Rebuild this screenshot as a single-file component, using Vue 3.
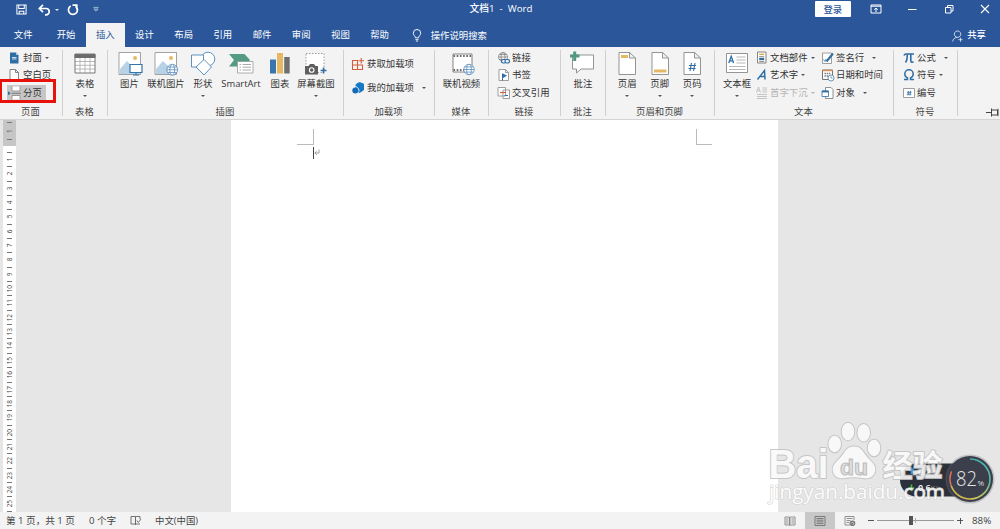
<template>
    <div class="word">
        <header class="title-bar">
            <div class="quick-access">
                <svg class="qa-save" viewBox="0 0 12 12">
                    <path
                        d="M1 1h10v10H1zM3 1v4h6V1M3.5 11V8h5v3"
                        fill="none"
                        stroke="#fff"
                        stroke-width="1.1"
                    />
                </svg>
                <svg class="qa-undo" viewBox="0 0 13 12">
                    <path
                        d="M1.500 4.500H8a3.200 3.200 0 0 1 0 6.400H7M5 .8 1.300 4.500 5 8.200"
                        fill="none"
                        stroke="#fff"
                        stroke-width="1.7"
                    />
                </svg>
                <i class="caret light"></i>
                <svg class="qa-redo" viewBox="0 0 12 12">
                    <path
                        d="M3.700 2A4.500 4.500 0 1 0 8.500 2.200M5.500 1.200H9.800V5.500"
                        fill="none"
                        stroke="#fff"
                        stroke-width="1.7"
                    />
                </svg>
                <svg class="qa-more" viewBox="0 0 7 6">
                    <path
                        d="M.5.500h6M1 2.500h5L3.500 5z"
                        fill="none"
                        stroke="#dfe6f2"
                        stroke-width=".8"
                    />
                </svg>
            </div>
            <div class="doc-title">文档1&nbsp; -&nbsp; Word</div>
            <div class="window-tools">
                <button class="login">登录</button>
                <svg class="win" viewBox="0 0 12 12">
                    <path
                        d="M1 2h10v8H1zM1 3.200h10M6 9V5M4.200 6.700 6 5l1.800 1.700"
                        fill="none"
                        stroke="#fff"
                    />
                </svg>
                <svg class="win" viewBox="0 0 12 12">
                    <path d="M2 6.500h8.500" stroke="#fff" />
                </svg>
                <svg class="win" viewBox="0 0 12 12">
                    <path
                        d="M2.500 4.500h5.500v5.500H2.500zM4.500 4.500V2.500H10V8H8"
                        fill="none"
                        stroke="#fff"
                    />
                </svg>
                <svg class="win" viewBox="0 0 12 12">
                    <path d="m2 2 8 8M10 2l-8 8" stroke="#fff" stroke-width="1.1" />
                </svg>
            </div>
        </header>

        <nav class="tabs">
            <span
                v-for="tab in tabs"
                :key="tab"
                class="tab"
                :class="{ active: tab === activeTab, file: tab === '文件' }"
                @click="activeTab = tab"
                >{{ tab }}</span
            >
            <svg class="bulb" viewBox="0 0 10 14">
                <path
                    d="M3.300 9.500C3.300 7.500 1 6.800 1 4.500a4 4 0 0 1 8 0c0 2.300-2.300 3-2.300 5zM3.300 11.500h3.400M4 13h2"
                    fill="none"
                    stroke="#fff"
                />
            </svg>
            <span class="tell-me">操作说明搜索</span>
            <svg class="person" viewBox="0 0 12 13">
                <path
                    d="M6 8a3.500 3.500 0 1 1 .1 0M.8 12.500C1 10 3 8 6 8M7 10.500h4.500M9.300 8.300v4.500"
                    fill="none"
                    stroke="#e4eaf4"
                    stroke-width=".9"
                />
            </svg>
            <span class="share">共享</span>
        </nav>

        <section class="ribbon">
            <div
                v-for="group in groups"
                :key="group.id"
                class="group"
                :style="{ width: group.width + 'px' }"
            >
                <div class="group-body" :class="group.id">
                    <div
                        v-for="item in group.big"
                        :key="item.label"
                        class="big"
                        :style="{ width: item.width + 'px' }"
                    >
                        <svg class="big-icon" viewBox="0 0 26 26">
                            <use :href="'#' + item.icon" />
                        </svg>
                        <span>{{ item.label }}</span>
                        <i v-if="item.menu" class="caret"></i>
                    </div>
                    <div v-for="(col, i) in group.cols" :key="i" class="col">
                        <div
                            v-for="item in col"
                            :key="item.label"
                            class="small"
                            :class="{
                                selected: item.selected,
                                disabled: item.disabled,
                            }"
                        >
                            <svg class="small-icon" viewBox="0 0 14 14">
                                <use :href="'#' + item.icon" />
                            </svg>
                            <span>{{ item.label }}</span>
                            <i
                                v-if="item.menu"
                                class="caret"
                                :class="{ far: item.far }"
                            ></i>
                        </div>
                    </div>
                </div>
                <div class="group-label">{{ group.label }}</div>
            </div>
            <div class="ribbon-end">
                <svg class="pin" viewBox="0 0 14 9">
                    <path
                        d="M0 4.500h5M5.500.5v8M5.500 2h6v5h-6M12 .8v7.400"
                        fill="none"
                        stroke="#444"
                    />
                </svg>
            </div>
            <div class="red-frame"></div>
        </section>

        <main class="workspace">
            <div class="ruler">
                <div class="ruler-margin">
                    <i></i>
                    <b>1</b>
                    <i></i>
                </div>
                <div v-for="n in 25" :key="n" class="ruler-cell">
                    <i></i>
                    <b>{{ n }}</b>
                </div>
                <i class="ruler-last"></i>
            </div>
            <div class="page">
                <div class="corner left"></div>
                <div class="corner right"></div>
                <div class="cursor">
                    <svg viewBox="0 0 6 6">
                        <path
                            d="M5 .5V4H1M2.700 2.200.8 4l1.900 1.700"
                            fill="none"
                            stroke="#888"
                            stroke-width=".8"
                        />
                    </svg>
                </div>
            </div>
        </main>

        <footer class="status">
            <span class="st-page">第 1 页，共 1 页</span>
            <span class="st-words">0 个字</span>
            <svg class="st-proof" viewBox="0 0 12 11">
                <path
                    d="M5.500 2v8M1 1.500h4.500V9H1zM5.500 1.500H10V4M5.500 9H10M6.800 5.500l1.500 2L11 4"
                    fill="none"
                    stroke="#666"
                    stroke-width=".9"
                />
            </svg>
            <span>中文(中国)</span>
            <div class="views">
                <span class="view">
                    <svg viewBox="0 0 12 12">
                        <path
                            d="M1 2h4.500v8H1zM6.500 2H11v8H6.500M6 2v9M2 4h2.500M2 6h2.500M2 8h2.500M7.500 4H10M7.500 6H10M7.500 8H10"
                            fill="none"
                            stroke="#777"
                            stroke-width=".8"
                        />
                    </svg>
                </span>
                <span class="view on">
                    <svg viewBox="0 0 12 12">
                        <path
                            d="M1 1.500h10v9H1zM2.500 3.500h7M2.500 5.200h7M2.500 6.900h7M2.500 8.600h7"
                            fill="none"
                            stroke="#666"
                            stroke-width=".8"
                        />
                    </svg>
                </span>
                <span class="view">
                    <svg viewBox="0 0 12 12">
                        <path
                            d="M6 10H1V1.500h9V5M2.500 3.500h6M2.500 5.500h4M2.500 7.500h3"
                            fill="none"
                            stroke="#777"
                            stroke-width=".8"
                        />
                        <circle cx="8.500" cy="8.300" r="2.800" fill="#777" />
                        <path
                            d="M7 8.500 8.500 7l1.300 1.500-1 1.500"
                            stroke="#eee"
                            stroke-width=".7"
                            fill="none"
                        />
                    </svg>
                </span>
            </div>
            <div class="zoom">
                <i class="minus"></i>
                <div class="track"><i class="thumb"></i><i class="mid"></i></div>
                <i class="plus"></i>
                <span class="percent">88%</span>
            </div>
        </footer>

        <!-- network speed widget floating over the desktop -->
        <svg class="meter" viewBox="0 0 104 54">
            <defs>
                <linearGradient id="ring" x1="0" y1="0" x2="0" y2="1">
                    <stop offset="0" stop-color="#43b8b4" />
                    <stop offset=".6" stop-color="#62b89b" />
                    <stop offset="1" stop-color="#d4ca52" />
                </linearGradient>
            </defs>
            <path
                d="M16.500 10.500H70v33H16.500a16.500 16.500 0 0 1 0-33"
                fill="#2c303b"
            />
            <path
                d="M11.500 21V15.500M9 18 11.500 15.300 14 18"
                fill="none"
                stroke="#2d9be0"
                stroke-width="1.600"
            />
            <path
                d="M11.500 31.500V37M9 34.500 11.500 37.200 14 34.500"
                fill="none"
                stroke="#3fba42"
                stroke-width="1.600"
            />
            <text x="18" y="21.500" class="speed">0.2<tspan>K/s</tspan></text>
            <text x="18" y="38" class="speed">0.6<tspan>K/s</tspan></text>
            <circle cx="70" cy="26" r="24.500" fill="#777b87" opacity=".35" />
            <circle cx="70" cy="26" r="23" fill="#3b3f4b" />
            <path
                d="M70 6a20 20 0 0 1 0 40"
                fill="none"
                stroke="url(#ring)"
                stroke-width="1.600"
            />
            <path
                d="M70 46A20 20 0 0 1 51.200 32.800"
                fill="none"
                stroke="#d6b84e"
                stroke-width="1.600"
            />
            <path
                d="M51.200 32.800A20 20 0 0 1 51.500 18.400"
                fill="none"
                stroke="#d6705c"
                stroke-width="1.600"
            />
            <text
                x="56"
                y="32.800"
                class="load"
                textLength="21"
                lengthAdjust="spacingAndGlyphs"
            >82</text>
            <text x="77.500" y="32.800" class="load-unit">%</text>
        </svg>

        <svg class="watermark" viewBox="0 0 190 92">
            <g class="outlined">
                <text
                    x="4.500"
                    y="59.500"
                    class="brand"
                    textLength="60"
                    lengthAdjust="spacingAndGlyphs"
                >Bai</text>
                <text x="118.500" y="58" class="brand-cn" textLength="60">经验</text>
                <ellipse cx="70.700" cy="26" rx="6.300" ry="8.300" />
                <ellipse cx="84" cy="13.500" rx="6.300" ry="8.800" />
                <ellipse cx="99.700" cy="14.800" rx="6.300" ry="8.800" />
                <ellipse cx="110" cy="30" rx="6.300" ry="8.300" />
                <path
                    d="M90 28.500c8 0 9 6 14 11.500 5 5 8.500 8 7 14-2 6-7 7-12 6-6-1-12-1-18 0-5 1-10 0-12-6-1.500-6 2-9 7-14 5-5.500 6-11.500 14-11.500z"
                />
            </g>
            <text
                x="76"
                y="57"
                class="du"
                textLength="28"
                lengthAdjust="spacingAndGlyphs"
            >du</text>
            <text
                x="5"
                y="81"
                class="site"
                textLength="176"
                lengthAdjust="spacingAndGlyphs"
            >jingyan.baidu.com</text>
        </svg>

        <svg class="sprite" width="0" height="0">
            <!-- small ribbon icons, 14 x 14 -->
            <symbol id="s-cover" viewBox="0 0 14 14">
                <path d="M3 1.500h6L11.500 4v8.500H3z" fill="#2f6ea5" />
                <path d="M9 1.500V4h2.500z" fill="#b4cbe0" />
                <path d="M5 6.500h4.500M5 8h4.500" stroke="#cfe0ef" />
            </symbol>
            <symbol id="s-blank" viewBox="0 0 14 14">
                <path
                    d="M3 1.500h5.500l3 3v8H3zM8.500 1.500v3h3"
                    fill="#fff"
                    stroke="#777"
                    stroke-width=".9"
                />
            </symbol>
            <symbol id="s-break" viewBox="0 0 14 14">
                <path
                    d="M5 .5v4.500h8V.5M5 13.500V9.500h8v4"
                    fill="#fff"
                    stroke="#888"
                    stroke-width=".8"
                />
                <path d="M4.500 7.300H14" stroke="#666" stroke-width=".8" />
                <path d="M1 5.300 3.800 7.300 1 9.300z" fill="#2f6ea5" />
            </symbol>
            <symbol id="s-get" viewBox="0 0 14 14">
                <path
                    d="M1.500 3.500h5v9h-5zM6.500 8h5v4.500h-5M1.500 8h5M10.200 1v5.500M7.500 3.700H13"
                    fill="none"
                    stroke="#d35f3c"
                    stroke-width="1.100"
                />
            </symbol>
            <symbol id="s-mine" viewBox="0 0 14 14">
                <path
                    d="M8.500 1.500 12.500 3v6l-4 2.500L5 9V3.500z"
                    fill="#1679c5"
                    stroke="#1679c5"
                />
                <circle cx="4.300" cy="9.500" r="3" fill="#1669b5" />
                <path d="M3 5.500C5.500 5 8 7 8 10.500" fill="none" stroke="#f1f1f1" />
            </symbol>
            <symbol id="s-link" viewBox="0 0 14 14">
                <g fill="none" stroke="#777" stroke-width=".7">
                    <circle cx="6" cy="6" r="4.500" />
                    <ellipse cx="6" cy="6" rx="2" ry="4.500" />
                    <path d="M1.500 6h9M2.200 3.500h7.600M2.200 8.500h3" />
                </g>
                <g fill="#f1f1f1" stroke="#2f6ea5" stroke-width="1.200">
                    <rect x="4.500" y="8.500" width="4.500" height="3.500" rx="1.700" />
                    <rect x="8" y="8.500" width="4.500" height="3.500" rx="1.700" />
                </g>
            </symbol>
            <symbol id="s-bookmark" viewBox="0 0 14 14">
                <path
                    d="M2 1.500h6.500l3 3v8H2zM8.500 1.500v3h3"
                    fill="#fff"
                    stroke="#888"
                    stroke-width=".8"
                />
                <path d="M5.500 5.500v7" stroke="#2f6ea5" />
                <path d="M6 5.500 10 7.800 6 10z" fill="#2f6ea5" />
            </symbol>
            <symbol id="s-cross" viewBox="0 0 14 14">
                <path
                    d="M1 1.500h7.500v8.500H1zM6 4h6.500v8.500H6z"
                    fill="#fff"
                    stroke="#888"
                    stroke-width=".8"
                />
                <path d="M3 6.500h6" stroke="#d35f3c" stroke-width="1.200" />
                <path d="M7.500 9.500h3.500" stroke="#2f6ea5" />
            </symbol>
            <symbol id="s-parts" viewBox="0 0 14 14">
                <path
                    d="M2.500 1h8.500v11H2.500z"
                    fill="#fff"
                    stroke="#777"
                    stroke-width=".9"
                />
                <path d="M4.200 3.300h5" stroke="#e0ad4e" stroke-width="1.400" />
                <path d="M4.200 5.800h5M4.200 10.300h5" stroke="#777" />
                <path d="M4.200 7h5v2H4.200z" fill="#2f6ea5" />
            </symbol>
            <symbol id="s-art" viewBox="0 0 14 14">
                <path
                    d="M2.500 11.500 9.500 2.500 10 11.500M5 8.500h4.500"
                    fill="none"
                    stroke="#2f6ea5"
                    stroke-width="1.500"
                />
            </symbol>
            <symbol id="s-drop" viewBox="0 0 14 14">
                <path
                    d="M1.500 6.500 3.500 1l2 5.500M2.200 4.800h2.600M7.500 2H12M7.500 4H12M7.500 6H12M2 8.500h10M2 10.500h10M2 12.500h10"
                    fill="none"
                    stroke="#b8b8b8"
                    stroke-width=".8"
                />
            </symbol>
            <symbol id="s-sign" viewBox="0 0 14 14">
                <path
                    d="M1.500 2h9v10.500h-9z"
                    fill="#fff"
                    stroke="#888"
                    stroke-width=".8"
                />
                <path d="M5.500 10.500 12 2.500" stroke="#2f6ea5" stroke-width="2" />
                <path
                    d="M2.500 8.500 4 10.500 5 8"
                    fill="none"
                    stroke="#2f6ea5"
                    stroke-width=".8"
                />
            </symbol>
            <symbol id="s-date" viewBox="0 0 14 14">
                <path
                    d="M1.500 2h10v9.500h-10z"
                    fill="#fff"
                    stroke="#666"
                    stroke-width=".9"
                />
                <path d="M1.500 2.500h10" stroke="#d98d5b" stroke-width="1.500" />
                <path
                    d="M3.500 5.500H10M3.500 8H8"
                    stroke="#777"
                    stroke-dasharray="1.400 .8"
                    stroke-width="1.400"
                />
                <circle
                    cx="10"
                    cy="10"
                    r="3"
                    fill="#fff"
                    stroke="#5a8ab5"
                    stroke-width=".9"
                />
                <path
                    d="M10 8.300V10h1.500"
                    fill="none"
                    stroke="#5a8ab5"
                    stroke-width=".8"
                />
            </symbol>
            <symbol id="s-object" viewBox="0 0 14 14">
                <path
                    d="M4.500 1.500h5.500l2 2v9H4.500z"
                    fill="#fff"
                    stroke="#777"
                    stroke-width=".8"
                />
                <path
                    d="M1 5h6.500v5.500H1z"
                    fill="#fff"
                    stroke="#2f6ea5"
                    stroke-width=".8"
                />
                <path d="M1 5.500h6.500" stroke="#2f6ea5" stroke-width="1.800" />
            </symbol>
            <symbol id="s-pi" viewBox="0 0 14 14">
                <path
                    d="M2 4.600C2.500 3.200 3 3 4 3h8M5.300 3.200C5.300 7 5 9.500 3.500 11.500M8.800 3.200v6.500c0 1.500 1.300 2 2.700 1"
                    fill="none"
                    stroke="#2f6ea5"
                    stroke-width="1.600"
                />
            </symbol>
            <symbol id="s-omega" viewBox="0 0 14 14">
                <path
                    d="M2 11.500h3.500V10C3.500 9 2.800 7.500 2.800 6a4.200 4.200 0 0 1 8.400 0c0 1.500-.7 3-2.700 4v1.500H12"
                    fill="none"
                    stroke="#2f6ea5"
                    stroke-width="1.500"
                />
            </symbol>
            <symbol id="s-number" viewBox="0 0 14 14">
                <path
                    d="M1.500 2.500h11v9h-11z"
                    fill="#fff"
                    stroke="#888"
                    stroke-width=".8"
                />
                <path
                    d="M6.500 5 6 9.500M8.500 5 8 9.500M5 6.300h4.500M4.800 8.200h4.500"
                    stroke="#2f6ea5"
                    stroke-width=".8"
                />
            </symbol>

            <!-- large ribbon icons, 26 x 26 -->
            <symbol id="b-table" viewBox="0 0 26 26">
                <path d="M3 3h20v19H3z" fill="#fff" />
                <path
                    d="M3 10.500h20M3 14.300h20M3 18h20M8 7v15M13 7v15M18 7v15"
                    stroke="#aaa"
                    stroke-width=".8"
                />
                <path d="M2.500 3h21v4h-21z" fill="#6b6b6b" />
                <path d="M3 3h20v19H3z" fill="none" stroke="#777" />
            </symbol>
            <symbol id="b-picture" viewBox="0 0 26 26">
                <path
                    d="M2 1.500h21.500v22H2z"
                    fill="#fff"
                    stroke="#8a8a8a"
                    stroke-width=".8"
                />
                <circle cx="18" cy="7" r="2" fill="#e9b765" />
                <path d="M3 23V18l7-8 6 6 3-2 4 4v5z" fill="#b7d1e6" />
                <path
                    d="M13 13.500h12v8H13z"
                    fill="#fff"
                    stroke="#3474aa"
                    stroke-width="1.200"
                />
                <path d="M16 24h6M19 21.500V24" stroke="#3474aa" />
            </symbol>
            <symbol id="globe" viewBox="0 0 14 14">
                <g fill="#fff" stroke="#5288b8" stroke-width=".8">
                    <circle cx="7" cy="7" r="5.600" />
                    <ellipse cx="7" cy="7" rx="2.500" ry="5.600" />
                    <path d="M1.400 7h11.200M2.200 4.200h9.600M2.200 9.800h9.600" />
                </g>
            </symbol>
            <symbol id="b-online" viewBox="0 0 26 26">
                <path
                    d="M2 1.500h21.500v22H2z"
                    fill="#fff"
                    stroke="#8a8a8a"
                    stroke-width=".8"
                />
                <circle cx="18" cy="7" r="2" fill="#e9b765" />
                <path d="M3 23V18l7-8 6 6 3-2 4 4v5z" fill="#b7d1e6" />
                <use href="#globe" x="12.500" y="12" width="13.500" height="13.500" />
            </symbol>
            <symbol id="b-shapes" viewBox="0 0 26 26">
                <g fill="#fff" stroke="#4d86b6" stroke-width=".9">
                    <circle cx="18" cy="8" r="6.800" />
                    <path d="M1.500 4h12v12h-12z" />
                    <path d="m14 8.500 7.500 7.500L14 24l-8-8z" />
                </g>
            </symbol>
            <symbol id="b-smart" viewBox="0 0 26 26">
                <path d="M1 3h15.500l5.500 6-5.500 6.500H1L6 9z" fill="#559a82" />
                <path
                    d="M9.500 10.500h15.500V22H9.500z"
                    fill="#fff"
                    stroke="#999"
                    stroke-width=".8"
                />
                <path
                    d="M11.500 13.500h1.500M11.500 16.200h1.500M11.500 19h1.500M14.500 13.500h8.500M14.500 16.200h8.500M14.500 19h8.500"
                    stroke="#aaa"
                />
            </symbol>
            <symbol id="b-chart" viewBox="0 0 26 26">
                <path d="M3 8.500h6v14H3z" fill="#3b75ad" />
                <path d="M10 2h6v20.500h-6z" fill="#e6b863" />
                <path d="M17.200 6h5.500v16.500h-5.500z" fill="#6f6f6f" />
            </symbol>
            <symbol id="b-shot" viewBox="0 0 26 26">
                <path
                    d="M3 2.500h18v19H3z"
                    fill="#fff"
                    stroke="#888"
                    stroke-width=".8"
                    stroke-dasharray="1.500 1.500"
                />
                <path d="M2 15h3.500l1.500-2h4l1.500 2H15v8.500H2z" fill="#5f5f5f" />
                <circle
                    cx="8.700"
                    cy="19"
                    r="2.300"
                    fill="#5f5f5f"
                    stroke="#fff"
                    stroke-width="1.100"
                />
                <path
                    d="M17.500 19.500h6M20.500 16.500v6"
                    stroke="#2f6ea5"
                    stroke-width="1.600"
                />
            </symbol>
            <symbol id="b-video" viewBox="0 0 26 26">
                <path
                    d="M4 3h19v18H4z"
                    fill="#fff"
                    stroke="#777"
                    stroke-width=".9"
                />
                <path
                    d="M4.500 5H23M4.500 19H23"
                    stroke="#666"
                    stroke-width="2.200"
                    stroke-dasharray="1.600 1.600"
                />
                <use href="#globe" x="13.500" y="12" width="13" height="13" />
            </symbol>
            <symbol id="b-comment" viewBox="0 0 26 26">
                <path
                    d="M2.500 4h21v14H11l-4.500 4V18h-4z"
                    fill="#fff"
                    stroke="#888"
                    stroke-width=".9"
                />
                <path d="M0 5h9.500M4.700.5v9.500" stroke="#4f9980" stroke-width="3" />
            </symbol>
            <symbol id="b-header" viewBox="0 0 26 26">
                <path
                    d="M5 1.500h10.500l6 5.500v16.500H5zM15.500 1.500V7h6"
                    fill="#fff"
                    stroke="#888"
                    stroke-width=".9"
                />
                <path d="M7 4h7v3H7z" fill="#e6b863" />
            </symbol>
            <symbol id="b-footer" viewBox="0 0 26 26">
                <path
                    d="M5 1.500h10.500l6 5.500v16.500H5zM15.500 1.500V7h6"
                    fill="#fff"
                    stroke="#888"
                    stroke-width=".9"
                />
                <path d="M7 18.500h12.500v3H7z" fill="#e6b863" />
            </symbol>
            <symbol id="b-pageno" viewBox="0 0 26 26">
                <path
                    d="M5 1.500h10.500l6 5.500v16.500H5zM15.500 1.500V7h6"
                    fill="#fff"
                    stroke="#888"
                    stroke-width=".9"
                />
                <path
                    d="m12.500 12-1.500 8M16 12l-1.500 8M10 14.500h7M9.500 17.500h7"
                    stroke="#2f6ea5"
                    stroke-width="1.100"
                />
            </symbol>
            <symbol id="b-textbox" viewBox="0 0 26 26">
                <path
                    d="M2.500 2.500h21v19h-21z"
                    fill="#fff"
                    stroke="#888"
                    stroke-width=".9"
                />
                <path
                    d="m4.800 12 2.400-6.800L9.600 12M5.600 9.800h3.200"
                    fill="none"
                    stroke="#2f6ea5"
                    stroke-width="1.300"
                />
                <path
                    d="M12.500 6h9M12.500 9h9M12.500 12h9M5 15.500h16.500M5 18.500h16.500"
                    stroke="#a5a5a5"
                    stroke-width=".8"
                />
            </symbol>
        </svg>
    </div>
</template>

<script setup>
import { ref } from "vue";

const tabs = [
    "文件",
    "开始",
    "插入",
    "设计",
    "布局",
    "引用",
    "邮件",
    "审阅",
    "视图",
    "帮助",
];
const activeTab = ref("插入");

const groups = [
    {
        id: "pages",
        label: "页面",
        width: 63,
        cols: [
            [
                { icon: "s-cover", label: "封面", menu: true },
                { icon: "s-blank", label: "空白页" },
                { icon: "s-break", label: "分页", selected: true },
            ],
        ],
    },
    {
        id: "tables",
        label: "表格",
        width: 45,
        big: [{ icon: "b-table", label: "表格", width: 44, menu: true }],
    },
    {
        id: "illustrations",
        label: "插图",
        width: 236,
        big: [
            { icon: "b-picture", label: "图片", width: 25 },
            { icon: "b-online", label: "联机图片", width: 48 },
            { icon: "b-shapes", label: "形状", width: 26, menu: true },
            { icon: "b-smart", label: "SmartArt", width: 50 },
            { icon: "b-chart", label: "图表", width: 28 },
            { icon: "b-shot", label: "屏幕截图", width: 44, menu: true },
        ],
    },
    {
        id: "addins",
        label: "加载项",
        width: 91,
        cols: [
            [
                { icon: "s-get", label: "获取加载项" },
                { icon: "s-mine", label: "我的加载项", menu: true, far: true },
            ],
        ],
    },
    {
        id: "media",
        label: "媒体",
        width: 54,
        big: [{ icon: "b-video", label: "联机视频", width: 53 }],
    },
    {
        id: "links",
        label: "链接",
        width: 72,
        cols: [
            [
                { icon: "s-link", label: "链接" },
                { icon: "s-bookmark", label: "书签" },
                { icon: "s-cross", label: "交叉引用" },
            ],
        ],
    },
    {
        id: "comments",
        label: "批注",
        width: 45,
        big: [{ icon: "b-comment", label: "批注", width: 44 }],
    },
    {
        id: "headers",
        label: "页眉和页脚",
        width: 109,
        big: [
            { icon: "b-header", label: "页眉", width: 32.5, menu: true },
            { icon: "b-footer", label: "页脚", width: 32.5, menu: true },
            { icon: "b-pageno", label: "页码", width: 32.5, menu: true },
        ],
    },
    {
        id: "texts",
        label: "文本",
        width: 179,
        big: [{ icon: "b-textbox", label: "文本框", width: 34, menu: true }],
        cols: [
            [
                { icon: "s-parts", label: "文档部件", menu: true },
                { icon: "s-art", label: "艺术字", menu: true },
                {
                    icon: "s-drop",
                    label: "首字下沉",
                    menu: true,
                    disabled: true,
                },
            ],
            [
                { icon: "s-sign", label: "签名行", menu: true, far: true },
                { icon: "s-date", label: "日期和时间" },
                { icon: "s-object", label: "对象", menu: true, far: true },
            ],
        ],
    },
    {
        id: "symbols",
        label: "符号",
        width: 64,
        cols: [
            [
                { icon: "s-pi", label: "公式", menu: true, far: true },
                { icon: "s-omega", label: "符号", menu: true },
                { icon: "s-number", label: "编号" },
            ],
        ],
    },
];
</script>

<style>
body {
    margin: 0;
    overflow: hidden;
}
</style>

<style scoped>
.word {
    position: relative;
    width: 1000px;
    height: 529px;
    display: flex;
    flex-direction: column;
    overflow: hidden;
    background: #e6e6e6;
    color: #333;
    font-family: "Open Sans", "Noto Sans CJK SC", sans-serif;
    font-size: 9.4px;
    line-height: 14px;
    white-space: nowrap;
}

svg {
    display: block;
    flex: none;
    overflow: visible;
}

.sprite {
    position: absolute;
}

.caret {
    flex: none;
    width: 0;
    height: 0;
    border: 2px solid transparent;
    border-top-color: #555;
    border-bottom: 0;
}

.caret.light {
    border-top-color: #dfe6f2;
}

/* title bar */
.title-bar {
    height: 23px;
    display: grid;
    grid-template-columns: 400px 202px 398px;
    background: #2b579a;
    color: #fff;
}

.quick-access {
    display: flex;
    align-items: center;
    height: 19px;
    padding-left: 16px;
}

.qa-save {
    width: 11px;
    height: 11px;
    margin-right: 11px;
}

.qa-undo {
    width: 13px;
    height: 12px;
    margin-right: 4px;
}

.qa-redo {
    width: 12px;
    height: 12px;
    margin: 0 14px 0 8px;
}

.qa-more {
    width: 6px;
    height: 5px;
}

.doc-title {
    text-align: center;
    line-height: 18px;
    font-size: 9.7px;
    font-weight: 500;
}

.window-tools {
    display: flex;
    justify-content: flex-end;
    align-items: center;
    height: 18px;
    padding-right: 9px;
    gap: 24.3px;
}

.login {
    width: 36px;
    height: 16px;
    margin: 0 -5px 0 0;
    padding: 0;
    border: 0;
    border-radius: 1px;
    background: #fff;
    color: #2b579a;
    font: 500 9.4px/15px "Noto Sans CJK SC", sans-serif;
}

.win {
    width: 12px;
    height: 12px;
}

/* tabs */
.tabs {
    height: 24px;
    display: flex;
    align-items: center;
    background: #2b579a;
    color: #fff;
}

.tab {
    width: 39.200px;
    height: 24px;
    line-height: 23px;
    text-align: center;
}

.tab.file {
    width: 46.500px;
}

.tab.active {
    background: #f3f3f3;
    color: #2b579a;
}

.bulb {
    width: 10px;
    height: 13px;
    margin: 0 9px 0 12.500px;
}

.tell-me {
    line-height: 23px;
}

.person {
    width: 11px;
    height: 12px;
    margin: 2px 4px 0 auto;
}

.share {
    margin-right: 14px;
    font-weight: 500;
}

/* ribbon */
.ribbon {
    position: relative;
    height: 72px;
    display: flex;
    background: #f3f3f3;
    border-bottom: 1px solid #d4d4d4;
}

.group {
    position: relative;
    flex: none;
    display: flex;
    flex-direction: column;
}

.group::after {
    content: "";
    position: absolute;
    right: 0;
    top: 3px;
    width: 1px;
    height: 66px;
    background: #d0d0d0;
}

.group-body {
    height: 58px;
    display: flex;
}

.group-label {
    text-align: center;
    color: #444;
    height: 14px;
    padding-right: 2px;
}

.big {
    display: flex;
    flex-direction: column;
    align-items: center;
    padding-top: 4px;
}

.big-icon {
    width: 26px;
    height: 26px;
}

.big .caret {
    margin-top: 4px;
}

.col {
    padding-top: 2px;
}

.small {
    display: flex;
    align-items: center;
    height: 17.500px;
}

.small-icon {
    width: 14px;
    height: 14px;
    margin-right: 2px;
}

.links .small-icon,
.texts .small-icon,
.symbols .small-icon {
    margin: 0 1px 0 1px;
}

.small .caret {
    margin-left: 3px;
}

.small .caret.far {
    margin-left: 8px;
}

.small.disabled {
    color: #b5b5b5;
}

.small.disabled .caret {
    border-top-color: #b5b5b5;
}

.small.selected {
    width: 39px;
    background: linear-gradient(#c6c6c6, #c6c6c6) 0 50% / 100% 15px no-repeat;
}

.pages {
    padding-left: 7px;
}

.illustrations {
    padding-left: 9px;
}

.addins {
    padding-left: 7px;
}

.addins .col {
    padding-top: 5px;
}

.addins .small {
    height: 24px;
}

.links {
    padding-left: 7px;
}

.headers {
    padding-left: 5px;
}

.texts {
    padding-left: 5px;
}

.texts .col {
    width: 66px;
}

.symbols {
    padding-left: 7px;
}

.ribbon-end {
    flex: 1;
    display: flex;
    align-items: flex-end;
    justify-content: flex-end;
    padding-bottom: 2px;
}

.pin {
    width: 14px;
    height: 9px;
}

.red-frame {
    position: absolute;
    left: 0;
    top: 32px;
    width: 51px;
    height: 18px;
    border: 3px solid #e8120c;
    border-left-width: 2px;
}

/* document area */
.workspace {
    flex: 1;
    min-height: 0;
    display: flex;
    overflow: hidden;
}

.ruler {
    width: 13px;
    margin-left: 3px;
    display: flex;
    flex-direction: column;
    align-items: center;
    background: #fff;
}

.ruler i {
    width: 5px;
    height: 1px;
    background: #777;
}

.ruler b {
    flex: 1;
    font-weight: 400;
    font-size: 6.500px;
    line-height: 8px;
    color: #444;
    writing-mode: vertical-rl;
    transform: rotate(180deg);
    text-align: center;
}

.ruler-margin {
    flex: none;
    align-self: stretch;
    height: 18px;
    margin-bottom: 6px;
    padding: 2px 0 6px;
    display: flex;
    flex-direction: column;
    align-items: center;
    background: #c6c6c6;
}

.ruler-cell {
    flex: none;
    height: 14.350px;
    display: flex;
    flex-direction: column;
    align-items: center;
}

.ruler-last {
    flex: none;
}

.page {
    position: relative;
    width: 547px;
    margin-left: 215px;
    background: #fff;
}

.corner {
    position: absolute;
    top: 9px;
    width: 16px;
    height: 15px;
    border-bottom: 1px solid #bbb;
}

.corner.left {
    left: 66px;
    border-right: 1px solid #bbb;
}

.corner.right {
    left: 465px;
    width: 15px;
    border-left: 1px solid #bbb;
}

.cursor {
    position: absolute;
    left: 82px;
    top: 27px;
    width: 6px;
    height: 12px;
    border-left: 1px solid #444;
}

.cursor svg {
    width: 6px;
    height: 6px;
    margin-top: 2px;
}

/* status bar */
.status {
    height: 17px;
    display: flex;
    align-items: center;
    background: #f3f3f3;
    padding-left: 6px;
    color: #444;
}

.st-page {
    width: 83px;
    font-size: 9.600px;
}

.st-words {
    width: 41px;
    font-size: 9.600px;
}

.st-proof {
    width: 12px;
    height: 11px;
    margin-right: 13px;
}

.views {
    display: flex;
    margin-left: auto;
}

.view {
    width: 30px;
    height: 17px;
    display: flex;
    align-items: center;
    justify-content: center;
}

.view.on {
    background: #c8c8c8;
}

.view svg {
    width: 12px;
    height: 12px;
}

.zoom {
    display: flex;
    align-items: center;
    padding-left: 3px;
    width: 135px;
    box-sizing: border-box;
}

.minus,
.plus {
    width: 6px;
    height: 1px;
    background: #555;
}

.plus {
    height: 6px;
    background:
        linear-gradient(#555, #555) 50% / 6px 1px no-repeat,
        linear-gradient(#555, #555) 50% / 1px 6px no-repeat;
}

.track {
    width: 77px;
    height: 1px;
    margin: 0 3px;
    background: #999;
    display: flex;
    align-items: center;
}

.thumb {
    width: 4px;
    height: 9px;
    margin-left: 32px;
    background: #555;
}

.mid {
    width: 1px;
    height: 5px;
    margin-left: 2px;
    background: #aaa;
}

.percent {
    margin-left: 9px;
    font-size: 9.800px;
}

/* overlays */
.meter {
    position: absolute;
    left: 900px;
    top: 453px;
    width: 104px;
    height: 54px;
}

.speed {
    fill: #fff;
    font-size: 9px;
    font-weight: 600;
}

.speed tspan {
    fill: #999;
    font-size: 7px;
    font-weight: 400;
}

.load {
    fill: #e4e4e6;
    font-family: "Open Sans", sans-serif;
    font-size: 20px;
    font-weight: 300;
}

.load-unit {
    fill: #ddd;
    font-size: 8px;
}

.watermark {
    position: absolute;
    left: 764px;
    top: 418px;
    width: 190px;
    height: 92px;
    opacity: 0.9;
}

.outlined {
    fill: #fafafa;
    stroke: #c2c2c2;
    stroke-width: 2px;
    stroke-linejoin: round;
    paint-order: stroke;
}

.brand {
    font: 700 40px "Liberation Sans", sans-serif;
}

.brand-cn {
    font: 700 30px "Noto Sans CJK SC", sans-serif;
}

.du {
    font: 700 22px "Liberation Sans", sans-serif;
    fill: #dedede;
    stroke: #b8b8b8;
    stroke-width: 1px;
    stroke-linejoin: round;
}

.site {
    font-size: 20px;
    font-weight: 500;
    fill: #fff;
    stroke: #cfcfcf;
    stroke-width: 1.200px;
    stroke-linejoin: round;
    paint-order: stroke;
}
</style>
